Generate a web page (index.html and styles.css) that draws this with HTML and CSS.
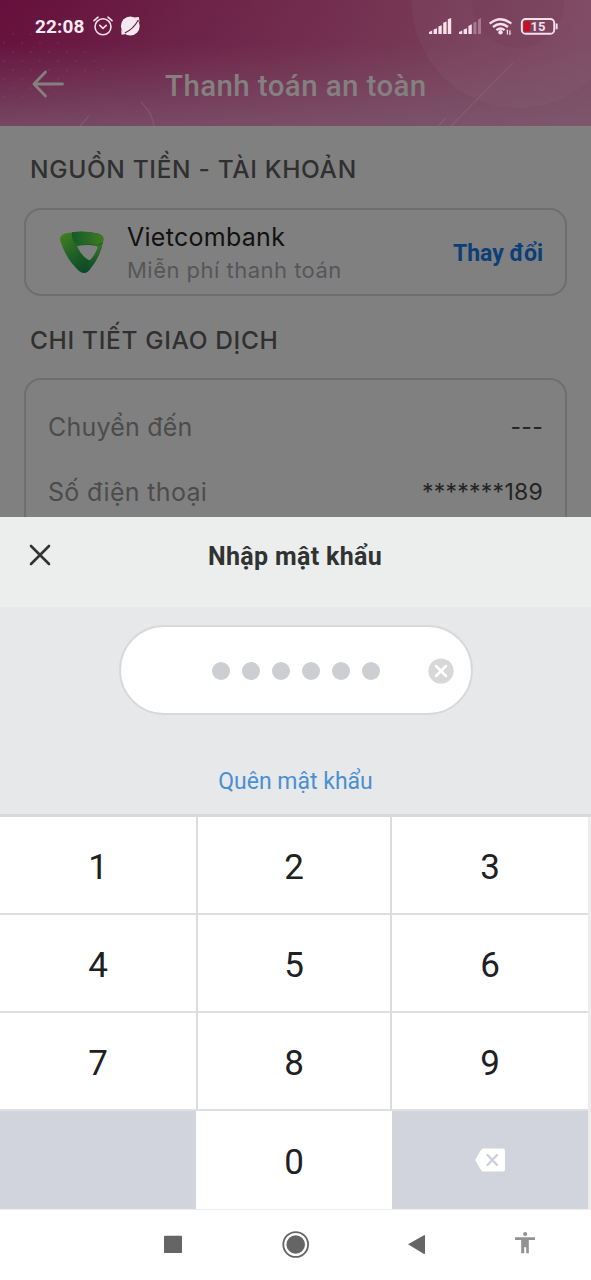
FILE: index.html
```html
<!DOCTYPE html>
<html lang="vi">
<head>
<meta charset="utf-8">
<title>Thanh toán an toàn</title>
<link rel="stylesheet" href="styles.css">
</head>
<body>
<div class="phone">
  <header class="header">
    <svg class="header-art" width="591" height="126" viewBox="0 0 591 126">
      <defs>
        <linearGradient id="hx" x1="0" x2="1" y1="0" y2="0">
          <stop offset="0" stop-color="#65103c"/><stop offset=".45" stop-color="#70284b"/><stop offset="1" stop-color="#7d4860"/>
        </linearGradient>
        <linearGradient id="hy" x1="0" x2="0" y1="0" y2="1">
          <stop offset="0" stop-color="#7d5c72" stop-opacity="0"/><stop offset=".35" stop-color="#7d5c72" stop-opacity=".05"/><stop offset="1" stop-color="#7d5c72" stop-opacity=".72"/>
        </linearGradient>
        <pattern id="dots" width="18" height="18" patternUnits="userSpaceOnUse">
          <circle cx="4" cy="7" r="1.2" fill="#a05078" opacity=".16"/><circle cx="13" cy="16" r="1.2" fill="#a05078" opacity=".16"/>
        </pattern>
      </defs>
      <rect width="591" height="126" fill="url(#hx)"/>
      <rect width="591" height="126" fill="url(#hy)"/>
      <path d="M0 30L55 36L122 70L70 80L0 112Z" fill="url(#dots)"/>
      <circle cx="518" cy="2" r="106" fill="#a08090" opacity=".09"/>
      <circle cx="518" cy="2" r="46" fill="#702848" opacity=".12"/>
      <g fill="none" stroke="#987088" stroke-opacity=".32" stroke-width="1.5">
        <path d="M513 63L451 126M446 118L438 126M141 102Q153 114 154 126M89 116L80 126"/>
      </g>
    </svg>
    <div class="status">
      <span class="time">22:08</span>
      <svg class="alarm" width="20" height="20" viewBox="0 0 20 20" fill="none" stroke="#f8dfea" stroke-width="1.6" stroke-linecap="round" stroke-linejoin="round">
        <circle cx="10" cy="10.8" r="8"/><path d="M6.8 9.4L10 12.3L13.2 9.4M1 4.7L5 1.2M19 4.7L15 1.2"/>
      </svg>
      <svg class="planet" width="21" height="20" viewBox="0 0 21 20">
        <circle cx="10.3" cy="10" r="9.4" fill="#f4e9f0"/><path d="M1.2 14L1.6 18.8L6 18zM14 1.4L18.8 1L19.6 6z" fill="#f4e9f0"/><path d="M4.8 17Q13 13.4 18.4 4" fill="none" stroke="#6c2046" stroke-width="1.2"/>
      </svg>
      <svg class="signals" width="131" height="20" viewBox="0 0 131 20">
        <g fill="#f8dfea">
          <path d="M0 14L3.2 12.5V16H0zM4.6 11.5L8 10.2V16H4.6zM9.4 8.5L12.8 7.2V16H9.4zM14.2 4.8L17.6 3.5V16H14.2zM18.8 1.2L22.2 0V16H18.8z"/>
          <path d="M30 14L33.2 12.5V16H30zM34.6 11.5L38 10.2V16H34.6zM39.4 8L42.8 6.2V16H39.4z"/>
          <path d="M44.4 4.8L47.4 3.5V16H44.4zM49 1.5L52 0V16H49z" opacity=".35"/>
          <circle cx="71.5" cy="14.2" r="2.2"/>
          <path d="M77 13L79 11.3V16.4H77.8V13zM80.3 12.3H81.5V15.5H82.5L80.3 17.6z"/>
        </g>
        <g fill="none" stroke="#f8dfea" stroke-width="2.3">
          <path d="M60.7 5.6Q71.5 -3.2 82.3 5.6M64 9Q71.5 2.9 79 9M67.4 12.2Q71.5 8.8 75.6 12.2"/>
          <rect x="92.8" y="1" width="32.4" height="14.7" rx="3.8" stroke-width="1.9"/>
          <path d="M127.6 5.5V11.2" stroke-width="2"/>
        </g>
        <rect x="95" y="3.2" width="6.2" height="10.2" rx="1.8" fill="#c90d22"/>
        <text class="battery" x="109" y="13" text-anchor="middle">15</text>
      </svg>
    </div>
    <div class="titlebar">
      <svg class="back" width="32" height="28" viewBox="0 0 32 28" fill="none" stroke="#858080" stroke-width="2.8" stroke-linecap="round" stroke-linejoin="round"><path d="M13.5 2L2 14L13.5 26M2 14H30.5"/></svg>
      <h1 class="title">Thanh toán an toàn</h1>
    </div>
  </header>

  <main class="content">
    <h2 class="section section-source">NGUỒN TIỀN - TÀI KHOẢN</h2>
    <section class="card bank">
      <svg class="logo" width="46" height="44" viewBox="0 0 46 44">
        <defs>
          <linearGradient id="la" x1="0" y1=".1" x2=".8" y2="1"><stop stop-color="#417f20"/><stop offset=".5" stop-color="#1d5d27"/><stop offset="1" stop-color="#053f29"/></linearGradient>
          <linearGradient id="lb" x1="0" y1="0" x2="1" y2="0"><stop stop-color="#16592b"/><stop offset="1" stop-color="#3f7a20"/></linearGradient>
          <linearGradient id="lc" x1="0" y1="0" x2="0" y2="1"><stop stop-color="#3c7922"/><stop offset="1" stop-color="#06472a"/></linearGradient>
        </defs>
        <path d="M1.3 10Q0 4.5 6 2.5Q22 -1.2 39 2.5Q46 4.4 44 11Q41 26 31 38Q26 45 20 40Q7 28 1.3 10z" fill="url(#la)"/>
        <path d="M13 1.2Q26 -.5 39 2.5Q46 4.4 44 11L38 14.2Q28 12 18 14.2Q12 9 13 1.2z" fill="url(#lb)"/>
        <path d="M38 14.2Q43 14 44 11Q41 26 31 38Q28.5 42 24.5 42Q29 38 30 28.5Q34 26 38 14.2z" fill="url(#lc)"/>
        <path d="M18 15.3Q28 13.1 37 14.8Q39 15.3 38.3 17.5Q36 24 31.5 28.4Q30 29.8 28.3 28.3Q22 24 18 15.3z" fill="#808080"/>
      </svg>
      <div class="bank-text">
        <div class="bank-name"><span>Vietcombank</span></div>
        <div class="bank-fee"><span>Miễn phí thanh toán</span></div>
      </div>
      <a class="change">Thay đổi</a>
    </section>
    <h2 class="section section-detail">CHI TIẾT GIAO DỊCH</h2>
    <section class="card detail">
      <div class="row"><span class="label to">Chuyển đến</span><span class="value dashes">---</span></div>
      <div class="row"><span class="label tel">Số điện thoại</span><span class="value">*******189</span></div>
    </section>
  </main>

  <section class="sheet">
    <div class="sheet-head">
      <svg class="close" width="22" height="22" viewBox="0 0 22 22" stroke="#303332" stroke-width="2.6" stroke-linecap="round"><path d="M2 2L20 20M20 2L2 20"/></svg>
      <h2 class="sheet-title">Nhập mật khẩu</h2>
    </div>
    <div class="entry">
      <div class="field">
        <div class="pins"><i class="pin"></i><i class="pin"></i><i class="pin"></i><i class="pin"></i><i class="pin"></i><i class="pin"></i></div>
        <svg class="clear" width="26" height="26" viewBox="0 0 26 26"><circle cx="13" cy="13" r="12.6" fill="#d8d8d8"/><path d="M8 8L18 18M18 8L8 18" stroke="#fff" stroke-width="2.5" stroke-linecap="round"/></svg>
      </div>
      <a class="forgot">Quên mật khẩu</a>
    </div>
  </section>

  <div class="keypad">
    <div class="key">1</div><div class="key">2</div><div class="key">3</div>
    <div class="key">4</div><div class="key">5</div><div class="key">6</div>
    <div class="key">7</div><div class="key">8</div><div class="key">9</div>
    <div class="key grey"></div><div class="key zero">0</div>
    <div class="key grey"><svg width="30" height="24" viewBox="0 0 30 24"><path d="M8.5 .5H28Q30 .5 30 2.5V21.5Q30 23.5 28 23.5H8.5Q7 23.5 6 22L0 12L6 2Q7 .5 8.5 .5z" fill="#fff"/><path d="M12.5 7L22 17M22 7L12.5 17" stroke="#cdd1d8" stroke-width="2.4" stroke-linecap="round"/></svg></div>
  </div>

  <nav class="nav">
    <svg width="591" height="70" viewBox="0 0 591 70" fill="#656565">
      <rect x="164" y="25.7" width="18" height="17.3" rx=".8"/>
      <circle cx="295.7" cy="34.5" r="12.4" fill="none" stroke="#656565" stroke-width="1.8"/><circle cx="295.7" cy="34.5" r="9.3"/>
      <path d="M408 34.3L424 25.2Q425 24.8 425 26V43.3Q425 44.4 424 44z"/>
      <g fill="#929292"><circle cx="525.2" cy="24" r="2.1"/><path d="M515 27.3H535V30H528.8V43.3H526.2V37.3H524.2V43.3H521.2V30H515z"/></g>
    </svg>
  </nav>
</div>
</body>
</html>
```
FILE: styles.css
```css
* { box-sizing: border-box; }
body { margin: 0; background: #fff; font-family: Roboto, "Liberation Sans", sans-serif; }
h1, h2 { margin: 0; font-weight: 500; }
svg { display: block; flex: none; }
span, a, h1, h2 { white-space: nowrap; }

.phone { width: 591px; height: 1280px; display: flex; flex-direction: column; overflow: hidden; }

.header { position: relative; height: 126px; flex: none; }
.header-art { position: absolute; inset: 0; }
.status { position: relative; height: 52px; display: flex; align-items: center; padding: 0 31px 0 35px; }
.time { width: 50px; font-size: 19px; font-weight: 700; color: #fbeaf2; line-height: 50px; padding-top: 2px; letter-spacing: .1px; }
.alarm { margin-left: 8px; }
.planet { margin-left: 7px; }
.signals { margin-left: auto; margin-top: 3px; }
.battery { font: 700 13px Roboto, sans-serif; fill: #f8dfea; }
.titlebar { position: relative; height: 66px; display: flex; align-items: center; padding-left: 32px; }
.back { margin-top: -2px; }
.title { margin-left: 101px; font-size: 29.5px; line-height: 66px; padding-top: 1px; letter-spacing: .4px; color: #858080; }

.content { height: 391px; flex: none; padding: 23px 24px 0; background: #808080; overflow: hidden; font-family: Inter, "Noto Sans", sans-serif; }
.section { padding-left: 6px; height: 40px; line-height: 40px; font-size: 24.5px; color: #303030; }
.section-source { letter-spacing: .65px; }
.section-detail { margin-top: 24px; letter-spacing: .65px; }
.card { border: 2px solid #6e6e70; border-radius: 17px; width: 543px; }
.bank { margin-top: 19px; height: 88px; display: flex; align-items: center; padding: 2px 22px 0 33px; }
.bank-text { margin-left: 22px; }
.bank-name { height: 34px; line-height: 34px; font-size: 25px; letter-spacing: .28px; color: #111; }
.bank-fee { height: 33px; line-height: 33px; font-size: 22px; letter-spacing: .48px; color: #565659; }
.change { margin-left: auto; font: 700 23px/30px Roboto, sans-serif; color: #0b3f78; padding-top: 1px; }
.detail { margin-top: 18px; height: 200px; padding: 14px 22px; }
.row { height: 65px; display: flex; align-items: center; justify-content: space-between; font-size: 25px; }
.label { color: #4c4c4c; }
.to { letter-spacing: .2px; }
.tel { letter-spacing: .33px; }
.value { color: #242424; font-size: 23px; letter-spacing: .25px; }

.sheet { flex: none; height: 297px; }
.sheet-head { height: 90px; padding: 0 29px 14px; background: #eceeed; display: flex; align-items: center; }
.sheet-title { margin-left: 157px; font-size: 25px; font-weight: 700; line-height: 36px; letter-spacing: .33px; color: #303332; padding-top: 3px; }
.entry { height: 207px; padding-top: 18px; background: #e7e8ea; display: flex; flex-direction: column; align-items: center; }
.field { width: 354px; height: 90px; border: 2px solid #d9d9db; border-radius: 45px; background: #fff; display: flex; align-items: center; padding: 1px 0 0 91px; }
.pins { display: flex; gap: 12.15px; }
.pin { width: 18px; height: 18px; border-radius: 50%; background: #cdced2; }
.clear { margin-left: 48px; }
.forgot { margin-top: 49px; font-size: 23px; line-height: 36px; color: #4a90d0; }

.keypad { flex: none; height: 396px; padding-right: 3px; background: #ededee; border-top: 3px solid #d9d9d9; border-bottom: 1px solid #ededed; display: grid; grid-template-columns: 198px 194px 196px; grid-template-rows: 98px 98px 98px 98px; }
.key { background: #fff; border-right: 2px solid #dcdcdc; border-bottom: 2px solid #dfdfdf; display: flex; align-items: center; justify-content: center; font-size: 35px; color: #202022; padding-top: 4px; }
.key:nth-child(3n) { border-right: 0; }
.key.grey { background: #d1d4dc; border-right: 0; border-bottom: 1px solid #d5d6d8; padding-top: 0; }
.key:nth-child(10) { width: 196px; }
.key.zero { border: 0; margin-left: -2px; }
.nav { flex: none; height: 70px; background: #fff; }
```
